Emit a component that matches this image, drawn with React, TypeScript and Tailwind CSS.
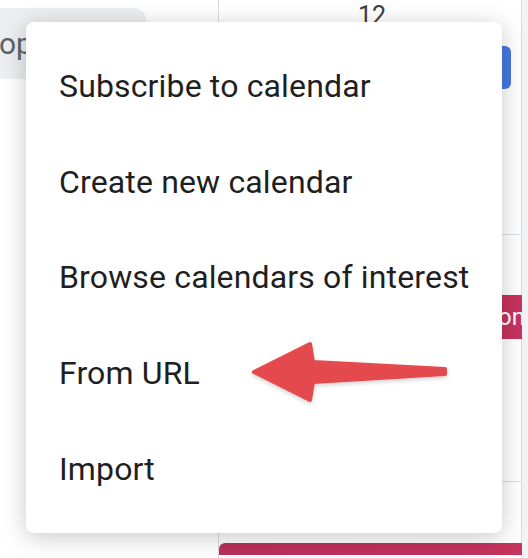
import React from "react";

const items = [
  "Subscribe to calendar",
  "Create new calendar",
  "Browse calendars of interest",
  "From URL",
  "Import",
];

export default function App() {
  return (
    <div className="relative w-[528px] h-[558px] overflow-hidden bg-white font-['Roboto',sans-serif]">
      {/* calendar behind the menu */}
      <div className="flex h-full">
        <div className="w-[218px] shrink-0 pt-2">
          <div className="flex h-[71px] w-[146px] items-center rounded-r-xl bg-[#eceef0] text-[30px] text-[#5f6368]">
            <span className="-ml-[1px]">op</span>
          </div>
        </div>
        <div className="flex w-[304px] shrink-0 flex-col border-x border-[#dadce0]">
          <div className="h-[46px] pt-[2px] pl-1 text-center text-[25px] leading-[28px] text-[#3c4043]">12</div>
          <div className="ml-3 mr-[10px] h-[43px] rounded-md bg-[#4879e0]" />
          <div className="h-[146px] border-b border-[#dadce0]" />
          <div className="h-[60px]" />
          <div className="-mr-[7px] ml-3 flex h-[44px] items-center justify-end rounded-l-md bg-gradient-to-r from-[#b82f5b] to-[#c7335f] pr-[3px] text-[24px] text-white">
            <span>on</span>
          </div>
          <div className="h-[143px] border-b border-[#dadce0]" />
          <div className="h-[61px]" />
          <div className="-mr-[7px] h-[12px] rounded-tl-md bg-gradient-to-r from-[#b82f5b] to-[#c7335f]" />
        </div>
        <div className="flex-1 bg-[#f1f3f4]" />
      </div>

      {/* menu */}
      <div className="absolute left-[26px] top-[22px] flex h-[511px] w-[476px] flex-col rounded-lg bg-white py-4 shadow-[0_4px_24px_rgba(0,0,0,0.22)]">
        {items.map((t) => (
          <div key={t} className="flex h-[96px] items-center pl-[33px] text-[32px] tracking-[0.15px] text-[#1f1f1f]">
            {t}
          </div>
        ))}
      </div>

      {/* red arrow */}
      <svg className="absolute left-0 top-0" width="528" height="558" viewBox="0 0 528 558">
        <defs>
          <filter id="sh" x="-20%" y="-40%" width="140%" height="180%">
            <feDropShadow dx="0" dy="2" stdDeviation="2" floodColor="#000" floodOpacity="0.18" />
          </filter>
        </defs>
        <path
          d="M254 372 L310 344 L313 362 L445 369 L445 374 L313 382 L310 400 Z"
          fill="#e34a4d"
          stroke="#e34a4d"
          strokeWidth="4"
          strokeLinejoin="round"
          filter="url(#sh)"
        />
      </svg>
    </div>
  );
}
